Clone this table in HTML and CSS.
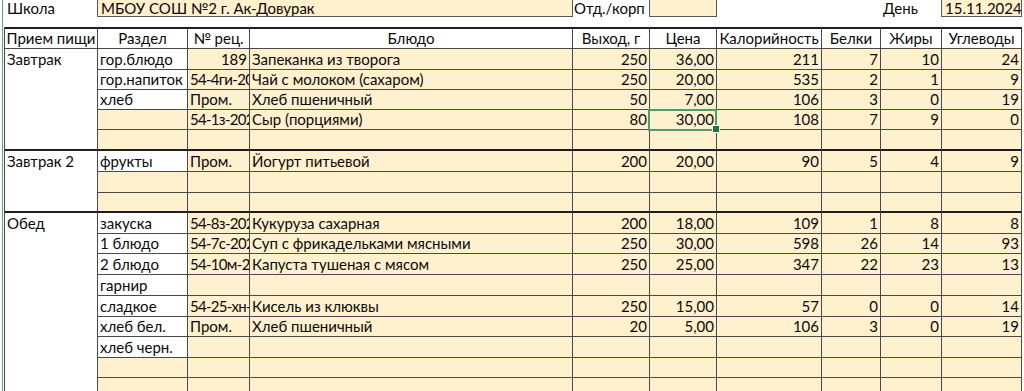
FILE: index.html
```html
<!DOCTYPE html>
<html lang="ru">
<head>
<meta charset="utf-8">
<title>Меню</title>
<link rel="stylesheet" href="styles.css">
</head>
<body>
<div class="sheet">
  <div class="topbar">
    <div class="lbl school">Школа</div>
    <div class="inbox name">МБОУ СОШ №2 г. Ак-Довурак</div>
    <div class="lbl dept">Отд./корп</div>
    <div class="inbox deptval"></div>
    <div class="lbl day">День</div>
    <div class="inbox date">15.11.2024</div>
  </div>

  <div class="grid">
    <div class="c h">Прием пищи</div>
    <div class="c h">Раздел</div>
    <div class="c h">№ рец.</div>
    <div class="c h">Блюдо</div>
    <div class="c h">Выход, г</div>
    <div class="c h">Цена</div>
    <div class="c h">Калорийность</div>
    <div class="c h">Белки</div>
    <div class="c h">Жиры</div>
    <div class="c h">Углеводы</div>

    <!-- Завтрак -->
    <div class="c meal s5 end">Завтрак</div>
    <div class="c lab">гор.блюдо</div><div class="c n">189</div><div class="c">Запеканка из творога</div><div class="c n">250</div><div class="c n">36,00</div><div class="c n">211</div><div class="c n">7</div><div class="c n">10</div><div class="c n">24</div>
    <div class="c lab">гор.напиток</div><div class="c rec">54-4ги-2020</div><div class="c">Чай с молоком (сахаром)</div><div class="c n">250</div><div class="c n">20,00</div><div class="c n">535</div><div class="c n">2</div><div class="c n">1</div><div class="c n">9</div>
    <div class="c lab">хлеб</div><div class="c">Пром.</div><div class="c">Хлеб пшеничный</div><div class="c n">50</div><div class="c n">7,00</div><div class="c n">106</div><div class="c n">3</div><div class="c n">0</div><div class="c n">19</div>
    <div class="c"></div><div class="c rec">54-1з-2020</div><div class="c">Сыр (порциями)</div><div class="c n">80</div><div class="c n sel">30,00</div><div class="c n">108</div><div class="c n">7</div><div class="c n">9</div><div class="c n">0</div>
    <div class="c end"></div><div class="c end"></div><div class="c end"></div><div class="c end"></div><div class="c end"></div><div class="c end"></div><div class="c end"></div><div class="c end"></div><div class="c end"></div>

    <!-- Завтрак 2 -->
    <div class="c meal s3 end">Завтрак 2</div>
    <div class="c lab">фрукты</div><div class="c">Пром.</div><div class="c">Йогурт питьевой</div><div class="c n">200</div><div class="c n">20,00</div><div class="c n">90</div><div class="c n">5</div><div class="c n">4</div><div class="c n">9</div>
    <div class="c"></div><div class="c"></div><div class="c"></div><div class="c"></div><div class="c"></div><div class="c"></div><div class="c"></div><div class="c"></div><div class="c"></div>
    <div class="c end"></div><div class="c end"></div><div class="c end"></div><div class="c end"></div><div class="c end"></div><div class="c end"></div><div class="c end"></div><div class="c end"></div><div class="c end"></div>

    <!-- Обед -->
    <div class="c meal s9">Обед</div>
    <div class="c lab">закуска</div><div class="c rec">54-8з-2020</div><div class="c">Кукуруза сахарная</div><div class="c n">200</div><div class="c n">18,00</div><div class="c n">109</div><div class="c n">1</div><div class="c n">8</div><div class="c n">8</div>
    <div class="c lab">1 блюдо</div><div class="c rec">54-7с-2020</div><div class="c">Суп с фрикадельками мясными</div><div class="c n">250</div><div class="c n">30,00</div><div class="c n">598</div><div class="c n">26</div><div class="c n">14</div><div class="c n">93</div>
    <div class="c lab">2 блюдо</div><div class="c rec">54-10м-2020</div><div class="c">Капуста тушеная с мясом</div><div class="c n">250</div><div class="c n">25,00</div><div class="c n">347</div><div class="c n">22</div><div class="c n">23</div><div class="c n">13</div>
    <div class="c lab">гарнир</div><div class="c"></div><div class="c"></div><div class="c"></div><div class="c"></div><div class="c"></div><div class="c"></div><div class="c"></div><div class="c"></div>
    <div class="c lab">сладкое</div><div class="c rec">54-25-хн-2020</div><div class="c">Кисель из клюквы</div><div class="c n">250</div><div class="c n">15,00</div><div class="c n">57</div><div class="c n">0</div><div class="c n">0</div><div class="c n">14</div>
    <div class="c lab">хлеб бел.</div><div class="c">Пром.</div><div class="c">Хлеб пшеничный</div><div class="c n">20</div><div class="c n">5,00</div><div class="c n">106</div><div class="c n">3</div><div class="c n">0</div><div class="c n">19</div>
    <div class="c lab">хлеб черн.</div><div class="c"></div><div class="c"></div><div class="c"></div><div class="c"></div><div class="c"></div><div class="c"></div><div class="c"></div><div class="c"></div>
    <div class="c"></div><div class="c"></div><div class="c"></div><div class="c"></div><div class="c"></div><div class="c"></div><div class="c"></div><div class="c"></div><div class="c"></div>
    <div class="c"></div><div class="c"></div><div class="c"></div><div class="c"></div><div class="c"></div><div class="c"></div><div class="c"></div><div class="c"></div><div class="c"></div>
  </div>
</div>
</body>
</html>
```

FILE: styles.css
```css
* { box-sizing: border-box; }

:root {
  --cols: 93px 90px 62px 323px 77px 67px 105px 59px 61px 80px;
  --fill: #fff0ce;
  --line: #4a4a4a;
  --thick: #1e1e1e;
}

html, body { margin: 0; background: #fff; }

body {
  font-family: Lato, "Liberation Sans", sans-serif;
  font-size: 15px;
  color: #0a0a0a;
  overflow: hidden;
  height: 391px;
}

.sheet {
  margin-left: 2px;
  border-left: 1px solid #5fa878;
  padding-left: 1px;
  height: 391px;
}

/* top line with school / department / date */
.topbar {
  display: grid;
  grid-template-columns: var(--cols);
  height: 17px;
  margin-bottom: 10px;
  padding-left: 1px;
  line-height: 16px;
  white-space: nowrap;
}
.lbl { padding: 0 2px; }
.school { grid-column: 1; }
.dept { grid-column: 5; padding-left: 1px; }
.day { grid-column: 9; padding-left: 2px; }
.inbox {
  background: var(--fill);
  border: 1px solid #595959;
  border-top: none;
  margin-left: -1px;
  padding: 0 2px 0 3px;
  overflow: hidden;
}
.name { grid-column: 2 / span 3; }
.deptval { grid-column: 6; }
.date { grid-column: 10; text-align: right; padding-right: 1px; }

/* main sheet grid */
.grid {
  display: grid;
  grid-template-columns: var(--cols);
  grid-template-rows: 22px 21px 20px 20px 20px 21px 21px 21px 20px 21px 20px 21px 21px 21px 20px 21px 20px 21px;
  border-left: 1px solid var(--line);
}

.c {
  display: flex;
  align-items: flex-end;
  padding: 0 2px 1px 2px;
  line-height: 18px;
  white-space: nowrap;
  overflow: hidden;
  background: var(--fill);
  border-right: 1px solid var(--line);
  border-bottom: 1px solid var(--line);
}

.h {
  background: #fff;
  justify-content: center;
  border-top: 2px solid var(--thick);
  padding: 0 2px 1px;
}

.n { justify-content: flex-end; padding-right: 2px; }
.rec { letter-spacing: -0.7px; }
.lab { background: #fff; }

.meal {
  background: #fff;
  align-items: flex-start;
  padding: 1px 2px 0 2px;
  border-bottom: none;
}
.s5 { grid-row: span 5; }
.s3 { grid-row: span 3; }
.s9 { grid-row: span 9; }

.end { border-bottom: 2px solid var(--thick); }

/* active cell selection */
.sel { position: relative; overflow: visible; }
.sel::before {
  content: "";
  position: absolute;
  left: -2px;
  top: -1px;
  right: -1px;
  bottom: -2px;
  border: 2px solid #4f9c6b;
}
.sel::after {
  content: "";
  position: absolute;
  right: -4px;
  bottom: -4px;
  width: 6px;
  height: 6px;
  background: #217346;
  border: 1px solid #fff;
}
```
